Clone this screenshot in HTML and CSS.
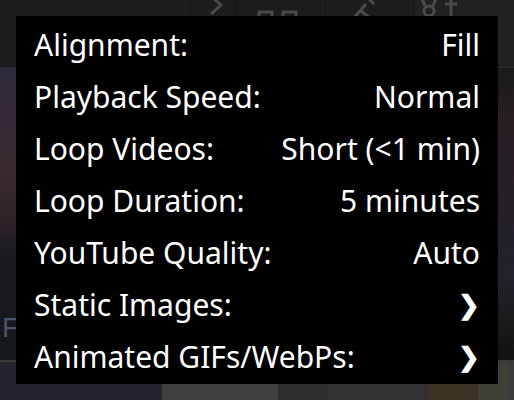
FILE: index.html
```html
<!DOCTYPE html>
<html lang="en">
<head>
  <meta charset="UTF-8" />
  <title>Player Settings</title>
  <link rel="stylesheet" href="styles.css">
</head>
<body>

  <!-- Toolbar behind the menu -->
  <div class="toolbar">
    <div class="tool-space"></div>
    <div class="tool tool-narrow">
      <svg width="45" height="40" viewBox="0 0 45 40"><path d="M20 -4 L30 5 L20 14" fill="none" stroke="#4a4a4a" stroke-width="3"/></svg>
    </div>
    <div class="tool tool-wide">
      <svg width="88" height="40" viewBox="0 0 88 40"><rect x="22" y="12" width="13" height="13" fill="none" stroke="#4a4a4a" stroke-width="3"/><rect x="46" y="12" width="13" height="13" fill="none" stroke="#4a4a4a" stroke-width="3"/></svg>
    </div>
    <div class="tool tool-wide">
      <svg width="88" height="40" viewBox="0 0 88 40"><path d="M26 20 L40 4 M34 10 L46 20 M42 -2 L48 4" fill="none" stroke="#4a4a4a" stroke-width="3"/></svg>
    </div>
    <div class="tool tool-last">
      <svg width="70" height="40" viewBox="0 0 70 40"><path d="M6 -4 L10 6 M22 -4 L18 6" fill="none" stroke="#4a4a4a" stroke-width="3"/><circle cx="14" cy="11" r="5" fill="none" stroke="#4a4a4a" stroke-width="3"/><path d="M14 16 V30 M36 0 V30 M30 4 H42" fill="none" stroke="#4a4a4a" stroke-width="3"/></svg>
    </div>
  </div>

  <!-- Thumbnails behind the menu -->
  <div class="gallery">
    <div class="tile tile-city">
      <span class="tile-letter">F</span>
    </div>
    <div class="tile tile-dark"></div>
  </div>
  <div class="strip">
    <div class="thumb thumb-a"></div>
    <div class="thumb thumb-b"></div>
    <div class="thumb thumb-c"></div>
    <div class="thumb thumb-d"></div>
    <div class="thumb thumb-e"></div>
    <div class="thumb thumb-f"></div>
    <div class="thumb thumb-g"></div>
  </div>

  <!-- Settings menu -->
  <div class="menu">
    <div class="menu-row"><span>Alignment:</span><span>Fill</span></div>
    <div class="menu-row"><span>Playback Speed:</span><span>Normal</span></div>
    <div class="menu-row"><span>Loop Videos:</span><span>Short (&lt;1 min)</span></div>
    <div class="menu-row"><span>Loop Duration:</span><span>5 minutes</span></div>
    <div class="menu-row"><span>YouTube Quality:</span><span>Auto</span></div>
    <div class="menu-row"><span>Static Images:</span><span class="arrow">&#10095;</span></div>
    <div class="menu-row"><span>Animated GIFs/WebPs:</span><span class="arrow">&#10095;</span></div>
  </div>

</body>
</html>
```

FILE: styles.css
```css
body {
  margin: 0;
  width: 514px;
  height: 400px;
  overflow: hidden;
  background: #141414;
  font-family: "Noto Sans", "Open Sans", sans-serif;
}

/* Toolbar */
.toolbar {
  display: flex;
  height: 67px;
  background: #1c1c1c;
  border-bottom: 1px solid #2a2a2a;
}
.tool-space {
  width: 190px;
}
.tool {
  overflow: hidden;
  border-left: 1px solid #161616;
}
.tool-narrow { width: 45px; }
.tool-wide { width: 88px; }
.tool-last { flex: 1; background: #212121; }

/* Background thumbnails */
.gallery {
  display: flex;
  height: 292px;
}
.tile-city {
  position: relative;
  width: 16px;
  background: linear-gradient(#2e2a3a, #3a2a30 35%, #2a2228 55%, #1a1c1f 62%, #15181b);
}
.tile-letter {
  position: absolute;
  left: 2px;
  top: 244px;
  color: #4b5466;
  font-size: 28px;
  line-height: 32px;
  font-family: "Liberation Sans", sans-serif;
}
.tile-dark {
  flex: 1;
  background: linear-gradient(#1a1a1a, #2a1e25 20%, #261f28 50%, #20222e 70%, #1b1818 90%, #111);
}
.strip {
  display: flex;
  height: 38px;
  border-top: 2px solid #3a3a3a;
}
.thumb { height: 100%; }
.thumb-a { width: 162px; background: #25222c; }
.thumb-b { width: 116px; background: #3f3f3f; }
.thumb-c { width: 50px; background: #2d2d2f; }
.thumb-d { width: 100px; background: #333033; }
.thumb-e { width: 50px; background: #3a3222; }
.thumb-f { width: 30px; background: #3f3f38; }
.thumb-g { flex: 1; background: #3c3a3c; }

/* Settings menu */
.menu {
  position: absolute;
  left: 16px;
  top: 16px;
  width: 482px;
  height: 368px;
  box-sizing: border-box;
  padding: 2px 18px;
  background: #000;
  color: #fff;
  font-size: 30px;
}
.menu-row {
  display: flex;
  justify-content: space-between;
  align-items: center;
  height: 52px;
}
.arrow {
  font-size: 26px;
  font-weight: bold;
}
```
